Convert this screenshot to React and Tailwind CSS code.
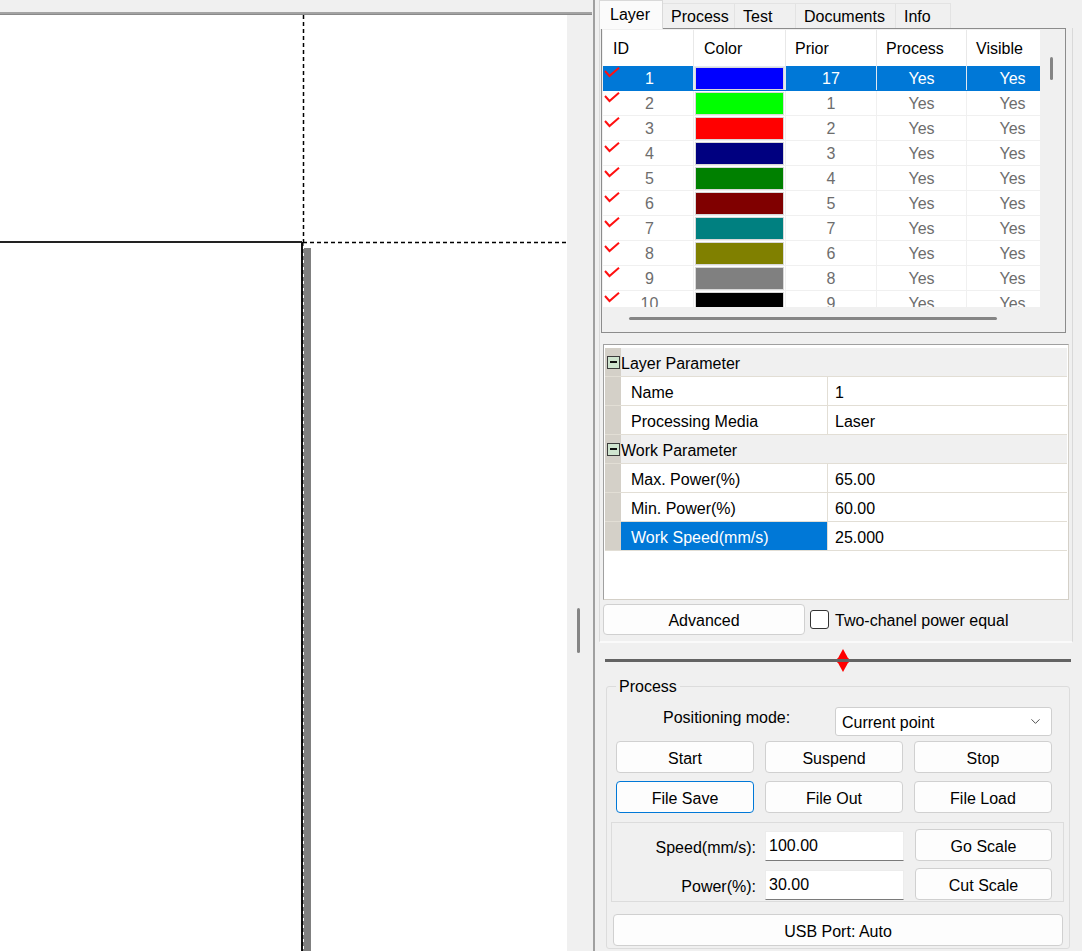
import React from "react";
import { ChevronDown } from "lucide-react";

const layers = [
  { id: 1, color: "#0000ff", prior: 17 },
  { id: 2, color: "#00ff00", prior: 1 },
  { id: 3, color: "#ff0000", prior: 2 },
  { id: 4, color: "#000080", prior: 3 },
  { id: 5, color: "#008000", prior: 4 },
  { id: 6, color: "#800000", prior: 5 },
  { id: 7, color: "#008080", prior: 7 },
  { id: 8, color: "#808000", prior: 6 },
  { id: 9, color: "#808080", prior: 8 },
  { id: 10, color: "#000000", prior: 9 },
];

const Check = () => (
  <svg width="16" height="11" viewBox="0 0 16 11" className="absolute left-[1px] top-[1px]">
    <polyline points="1,4 5.5,9 15,0.8" fill="none" stroke="#ff1010" strokeWidth="2" />
  </svg>
);

const MinusBox = () => (
  <div className="w-[13px] h-[13px] border border-[#3c3c3c] bg-[#cfe4cf] flex items-center justify-center">
    <div className="w-[7px] h-[1.5px] bg-[#111]" />
  </div>
);

const WinButton = ({ children, className = "", focused = false }) => (
  <button
    className={
      "flex items-center justify-center pt-[3px] rounded-[4px] bg-[#fdfdfd] text-[16px] text-black " +
      (focused ? "border-[1.5px] border-[#0078d7] " : "border border-[#d0d0d0] ") +
      className
    }
  >
    {children}
  </button>
);

const Canvas = () => (
  <div className="w-[593px] h-full flex flex-col">
    <div className="h-[12px] bg-[#f0f0f0]" />
    <div className="h-[3px] w-[592px] bg-[#a3a3a3] border-b border-[#8a8a8a]" />
    <div className="flex flex-1">
      <div className="w-[567px] h-full relative bg-white overflow-hidden">
        <svg className="absolute inset-0" width="567" height="936">
          <line x1="303.5" y1="0" x2="303.5" y2="227" stroke="#000" strokeWidth="1.5" strokeDasharray="4 3" />
          <line x1="303" y1="227.5" x2="567" y2="227.5" stroke="#000" strokeWidth="1.5" strokeDasharray="4 3" />
          <line x1="0" y1="227" x2="302" y2="227" stroke="#222" strokeWidth="2" />
          <rect x="304" y="233" width="7" height="703" fill="#808080" />
          <line x1="302" y1="227" x2="302" y2="936" stroke="#111" strokeWidth="2" />
          <line x1="303" y1="227" x2="303" y2="936" stroke="#000" strokeWidth="1" strokeDasharray="4 3" />
        </svg>
      </div>
      <div className="w-[26px] bg-[#f0f0f0] pt-[593px] pl-[10px]">
        <div className="w-[3px] h-[45px] bg-[#858585] rounded-full" />
      </div>
    </div>
  </div>
);

const LayerTable = () => (
  <div className="ml-[1px] w-[465px] h-[305px] border border-[#8c8c8c] bg-[#f0f0f0] p-px flex flex-col">
    <div className="flex h-[277px]">
      <div className="w-[437px] h-[277px] bg-white overflow-hidden">
        <div className="w-[455px]">
          <div className="flex h-[36px] items-center text-black">
            <div className="w-[91px] h-full pl-[10px] pt-[2px] flex items-center border-r border-[#e8e8e8]">ID</div>
            <div className="w-[92px] h-full pl-[10px] pt-[2px] flex items-center border-r border-[#e8e8e8]">Color</div>
            <div className="w-[91px] h-full pl-[9px] pt-[2px] flex items-center border-r border-[#e8e8e8]">Prior</div>
            <div className="w-[90px] h-full pl-[9px] pt-[2px] flex items-center border-r border-[#e8e8e8]">Process</div>
            <div className="w-[91px] h-full pl-[9px] pt-[2px] flex items-center">Visible</div>
          </div>
          {layers.map((l) => {
            const sel = l.id === 1;
            const cell =
              "h-full flex items-center justify-center border-r " +
              (sel ? "border-[#e0e8f0]" : "border-[#f0f0f0]");
            return (
              <div
                key={l.id}
                className={
                  "flex h-[25px] border-b " +
                  (sel ? "bg-[#0078d7] text-white border-[#0078d7]" : "text-[#6d6d6d] border-[#f0f0f0]")
                }
              >
                <div className={"relative w-[91px] pt-[2px] " + cell}>
                  <Check />
                  <span className="ml-[3px]">{l.id}</span>
                </div>
                <div className={"w-[92px] px-[1px] " + (sel ? "bg-[#e0e8f0] " : "bg-white ") + cell}>
                  <div className="w-full h-[23px] border border-[#d8d8d8]" style={{ backgroundColor: l.color }} />
                </div>
                <div className={"w-[91px] pt-[2px] " + cell}>{l.prior}</div>
                <div className={"w-[90px] pt-[2px] " + cell}>Yes</div>
                <div className="w-[91px] h-full pt-[2px] flex items-center justify-center">Yes</div>
              </div>
            );
          })}
        </div>
      </div>
      <div className="w-[24px] bg-[#f0f0f0] pt-[27px] pl-[10px]">
        <div className="w-[3px] h-[23px] bg-[#858585] rounded-full" />
      </div>
    </div>
    <div className="h-[24px] pl-[26px] pt-[10px]">
      <div className="w-[368px] h-[3px] bg-[#858585] rounded-full" />
    </div>
  </div>
);

const ParamRow = ({ label, value, selected = false }) => (
  <div className="flex h-[29px] border-b border-[#e2ded5]">
    <div className="w-[16px] bg-[#d4d0c8]" />
    <div
      className={
        "w-[207px] pl-[10px] pt-[4px] flex items-center border-r border-[#e2ded5] " +
        (selected ? "bg-[#0078d7] text-white" : "bg-white text-black")
      }
    >
      {label}
    </div>
    <div className="flex-1 pl-[7px] pt-[4px] flex items-center bg-white text-black">{value}</div>
  </div>
);

const ParamCategory = ({ title }) => (
  <div className="flex h-[29px] bg-[#f0f0f0] border-b border-[#e2ded5]">
    <div className="w-[16px] bg-[#d4d0c8] flex items-center pl-[2px]">
      <MinusBox />
    </div>
    <div className="flex-1 flex items-center pt-[4px] text-black">{title}</div>
  </div>
);

const Params = () => (
  <div className="ml-[3px] mt-[11px] w-[466px] h-[256px] border-t border-l border-[#a0a0a0] border-r border-b border-r-[#d4d0c8] border-b-[#d4d0c8] bg-white px-px pt-[3px] flex flex-col">
    <ParamCategory title="Layer Parameter" />
    <ParamRow label="Name" value="1" />
    <ParamRow label="Processing Media" value="Laser" />
    <ParamCategory title="Work Parameter" />
    <ParamRow label="Max. Power(%)" value="65.00" />
    <ParamRow label="Min. Power(%)" value="60.00" />
    <ParamRow label="Work Speed(mm/s)" value="25.000" selected />
    <div className="flex-1 bg-white" />
  </div>
);

const Tabs = () => {
  const tabs = [
    { name: "Process", w: "w-[72px]" },
    { name: "Test", w: "w-[61px]" },
    { name: "Documents", w: "w-[100px]" },
    { name: "Info", w: "w-[55px]" },
  ];
  return (
    <div className="h-[28px] flex items-end pl-[2px]">
      <div className="w-[64px] h-[29px] bg-[#fbfbfb] border border-b-0 border-[#d9d9d9] pl-[10px] flex items-center text-black relative -mb-px z-10">
        Layer
      </div>
      {tabs.map((t) => (
        <div
          key={t.name}
          className={t.w + " h-[25px] bg-[#f0f0f0] border-t border-r border-[#e3e3e3] pl-[8px] pt-[2px] flex items-center text-black"}
        >
          {t.name}
        </div>
      ))}
    </div>
  );
};

const Splitter = () => (
  <div className="relative h-[43px]">
    <svg className="absolute left-[240px] top-[6px]" width="12" height="23" viewBox="0 0 12 23">
      <polygon points="6,0 11.5,10 0.5,10" fill="#ff0000" />
      <polygon points="0.5,13 11.5,13 6,23" fill="#ff0000" />
      <rect x="0.5" y="9" width="11" height="5" fill="#ff0000" />
    </svg>
    <div className="absolute left-[8px] top-[16px] w-[466px] h-[3px] bg-[#636363]" />
  </div>
);

const ProcessGroup = () => (
  <div className="relative ml-[9px] w-[464px] h-[263px] border border-[#dcdcdc] rounded-[3px] flex flex-col">
    <span className="absolute left-[9px] -top-[8px] px-[3px] bg-[#f0f0f0] text-black">Process</span>
    <div className="flex items-start mt-[20px] h-[29px]">
      <span className="ml-[56px] w-[172px] mt-[3px] text-black">Positioning mode:</span>
      <div className="w-[217px] h-[29px] bg-white border border-[#cfcfcf] rounded-[3px] flex items-center pl-[6px] pr-[8px] justify-between text-black">
        <span className="mt-[3px]">Current point</span>
        <ChevronDown size={15} strokeWidth={1.5} color="#444" />
      </div>
    </div>
    <div className="flex ml-[9px] mt-[5px] gap-[11px]">
      <WinButton className="w-[138px] h-[32px]">Start</WinButton>
      <WinButton className="w-[138px] h-[32px]">Suspend</WinButton>
      <WinButton className="w-[138px] h-[32px]">Stop</WinButton>
    </div>
    <div className="flex ml-[9px] mt-[8px] gap-[11px]">
      <WinButton className="w-[138px] h-[32px]" focused>File Save</WinButton>
      <WinButton className="w-[138px] h-[32px]">File Out</WinButton>
      <WinButton className="w-[138px] h-[32px]">File Load</WinButton>
    </div>
    <div className="ml-[4px] mt-[9px] w-[453px] h-[80px] border border-[#dcdcdc] flex flex-col">
      <div className="flex items-center mt-[6px]">
        <span className="w-[144px] text-right text-black mt-[6px]">Speed(mm/s):</span>
        <div className="ml-[9px] w-[139px] h-[30px] bg-white border border-[#ececec] border-b-[#7a7a7a] pl-[3px] mt-[2px] flex items-start pt-[6px] text-black">100.00</div>
        <WinButton className="ml-[11px] w-[137px] h-[32px]">Go Scale</WinButton>
      </div>
      <div className="flex items-center mt-[7px]">
        <span className="w-[144px] text-right text-black mt-[6px]">Power(%):</span>
        <div className="ml-[9px] w-[139px] h-[30px] bg-white border border-[#ececec] border-b-[#7a7a7a] pl-[3px] mt-[2px] flex items-start pt-[6px] text-black">30.00</div>
        <WinButton className="ml-[11px] w-[137px] h-[32px]">Cut Scale</WinButton>
      </div>
    </div>
    <WinButton className="ml-[6px] mt-[12px] w-[450px] h-[32px]">USB Port: Auto</WinButton>
  </div>
);

const RightPanel = () => (
  <div className="w-[485px] h-full bg-[#f0f0f0] flex flex-col">
    <Tabs />
    <div className="ml-[2px] w-[474px] h-[615px] border-l border-r border-[#d9d9d9] border-b-2 border-b-[#fafafa] flex flex-col">
      <LayerTable />
      <Params />
      <div className="flex items-center mt-[4px] ml-[3px]">
        <WinButton className="w-[202px] h-[31px]">Advanced</WinButton>
        <div className="ml-[5px] w-[19px] h-[19px] border border-[#333] rounded-[3px] bg-white" />
        <span className="ml-[6px] mt-[2px] text-black">Two-chanel power equal</span>
      </div>
    </div>
    <Splitter />
    <ProcessGroup />
  </div>
);

export default function App() {
  return (
    <div className="w-[1082px] h-[951px] flex bg-[#f0f0f0] overflow-hidden text-[16px] font-['Liberation_Sans',Arial,sans-serif] leading-none">
      <Canvas />
      <div className="w-[2px] h-full bg-[#a0a0a0]" />
      <div className="w-[2px] h-full bg-[#f0f0f0]" />
      <RightPanel />
    </div>
  );
}
